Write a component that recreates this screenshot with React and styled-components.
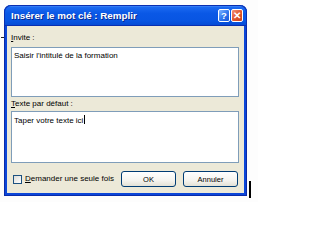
import React from "react";
import styled, { createGlobalStyle } from "styled-components";

const Global = createGlobalStyle`
  html, body { margin: 0; padding: 0; background: #ffffff; }
  body { font-family: "Liberation Sans", Arial, sans-serif; }
`;

const Page = styled.div`
  position: relative;
  width: 258px;
  height: 202px;
  overflow: hidden;
  background: #fdfdfd;
  padding: 5px 0 0 4px;
  box-sizing: border-box;
`;

const Window = styled.div`
  width: 243px;
  height: 191px;
  display: flex;
  flex-direction: column;
  border-radius: 7px 7px 0 0;
  background: #0b46d8;
  box-shadow: inset 0 0 0 1px #0a2aa8;
  box-sizing: border-box;
`;

const TitleBar = styled.div`
  height: 21px;
  flex: none;
  display: flex;
  align-items: center;
  padding: 0 4px 0 7px;
  border-radius: 7px 7px 0 0;
  background: linear-gradient(
    #5a9cff 0%,
    #1a68f0 12%,
    #0a58e6 40%,
    #0855e2 75%,
    #0549d2 100%
  );
  box-shadow: inset 0 0 0 1px #0a2fb0;
`;

const Title = styled.span`
  flex: 1;
  color: #ffffff;
  font-weight: bold;
  font-size: 9.8px;
  line-height: 12px;
  white-space: nowrap;
  text-shadow: 1px 1px 0 #0a2a8c;
`;

const CaptionButton = styled.div`
  width: 12px;
  height: 13px;
  margin-left: 1px;
  border: 1px solid #ffffff;
  border-radius: 2px;
  box-sizing: border-box;
  display: flex;
  align-items: center;
  justify-content: center;
  color: #ffffff;
  font-weight: bold;
  font-size: 9.5px;
  line-height: 9px;
  background: ${(p) =>
    p.$close
      ? "linear-gradient(135deg, #f3937a 0%, #e2582f 50%, #c8401c 100%)"
      : "linear-gradient(135deg, #84b6ff 0%, #3178f0 50%, #1656d8 100%)"};
`;

const Body = styled.div`
  flex: 1;
  margin: 0 3px 3px 3px;
  background: #ece9d8;
  padding: 7px 5px 6px 4px;
  display: flex;
  flex-direction: column;
`;

const Label = styled.div`
  font-size: 8px;
  line-height: 10px;
  height: 10px;
  color: #000000;
  margin-top: ${(p) => p.$mt || 0}px;
  white-space: nowrap;
`;

const Key = styled.span`
  text-decoration: underline;
  text-underline-offset: 1px;
`;

const TextBox = styled.div`
  height: ${(p) => p.$h}px;
  margin-top: ${(p) => p.$mt}px;
  border: 1px solid #7f9db9;
  background: #ffffff;
  box-sizing: border-box;
  padding: 3px 2px;
  font-size: 8px;
  line-height: 10px;
  color: #000000;
  white-space: nowrap;
`;

const Caret = styled.span`
  display: inline-block;
  width: 1px;
  height: 9px;
  margin-left: 1px;
  vertical-align: -1px;
  background: #000000;
`;

const Footer = styled.div`
  margin-top: 8px;
  height: 16px;
  display: flex;
  align-items: center;
`;

const CheckBox = styled.div`
  width: 9px;
  height: 9px;
  margin-left: 2px;
  border: 1px solid #1c5180;
  box-sizing: border-box;
  background: linear-gradient(135deg, #dcdcd7 0%, #ffffff 100%);
`;

const CheckLabel = styled.span`
  flex: 1;
  margin-left: 3px;
  font-size: 8px;
  line-height: 10px;
  white-space: nowrap;
`;

const Button = styled.div`
  width: 55px;
  height: 16px;
  margin-left: ${(p) => p.$ml || 0}px;
  margin-right: ${(p) => p.$mr || 0}px;
  box-sizing: border-box;
  border: 1px solid #003c74;
  border-radius: 3px;
  background: linear-gradient(#ffffff 0%, #f5f4ef 60%, #e3e1d6 100%);
  display: flex;
  align-items: center;
  justify-content: center;
  font-size: 7.5px;
  color: #000000;
`;

const CursorBar = styled.div`
  position: absolute;
  left: 249px;
  top: 181px;
  width: 2px;
  height: 17px;
  background: #000000;
`;

const Tick = styled.div`
  position: absolute;
  left: 1px;
  top: ${(p) => p.$top}px;
  width: 3px;
  height: ${(p) => p.$h}px;
  background: ${(p) => p.$c};
`;

export default function App() {
  return (
    <>
      <Global />
      <Page>
        <Window>
          <TitleBar>
            <Title>Insérer le mot clé : Remplir</Title>
            <CaptionButton>?</CaptionButton>
            <CaptionButton $close>✕</CaptionButton>
          </TitleBar>
          <Body>
            <Label>
              <Key>I</Key>nvite :
            </Label>
            <TextBox $h={50} $mt={4}>
              Saisir l'intitulé de la formation
            </TextBox>
            <Label $mt={2}>
              <Key>T</Key>exte par défaut :
            </Label>
            <TextBox $h={52} $mt={2}>
              Taper votre texte ici
              <Caret />
            </TextBox>
            <Footer>
              <CheckBox />
              <CheckLabel>
                <Key>D</Key>emander une seule fois
              </CheckLabel>
              <Button>OK</Button>
              <Button $ml={7} $mr={1}>
                Annuler
              </Button>
            </Footer>
          </Body>
        </Window>
        <Tick $top={37} $h={1} $c="#222" />
        <CursorBar />
      </Page>
    </>
  );
}
